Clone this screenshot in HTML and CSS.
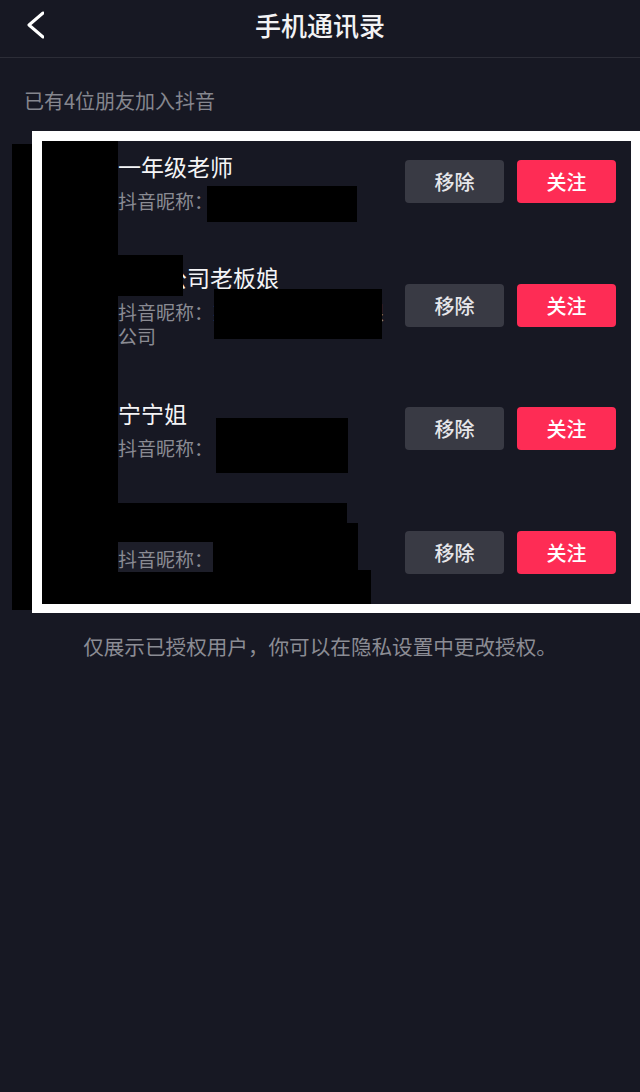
FILE: index.html
```html
<!DOCTYPE html>
<html lang="zh-CN">
<head>
<meta charset="utf-8">
<title>手机通讯录</title>
<link rel="stylesheet" href="styles.css">
</head>
<body>
<div class="page">
  <header class="topbar">
    <div class="back">
      <svg width="20" height="28" viewBox="0 0 20 28"><polyline points="19,2 5,14 19,26" fill="none" stroke="#ffffff" stroke-width="3" stroke-linecap="round" stroke-linejoin="round"/></svg>
    </div>
    <h1 class="title">手机通讯录</h1>
    <div></div>
  </header>

  <p class="subtitle">已有4位朋友加入抖音</p>

  <ul class="list">
    <li class="row">
      <div class="avatar"></div>
      <div class="info">
        <div class="name">一年级老师</div>
        <div class="nick">抖音昵称：某某某某某某</div>
      </div>
      <div class="actions">
        <button class="btn btn-remove">移除</button>
        <button class="btn btn-follow">关注</button>
      </div>
    </li>
    <li class="row">
      <div class="avatar"></div>
      <div class="info">
        <div class="name">某某公司老板娘</div>
        <div class="nick">抖音昵称：某某某某某某某有限公司</div>
      </div>
      <div class="actions">
        <button class="btn btn-remove">移除</button>
        <button class="btn btn-follow">关注</button>
      </div>
    </li>
    <li class="row">
      <div class="avatar"></div>
      <div class="info">
        <div class="name">宁宁姐</div>
        <div class="nick">抖音昵称：&nbsp;某某某某某</div>
      </div>
      <div class="actions">
        <button class="btn btn-remove">移除</button>
        <button class="btn btn-follow">关注</button>
      </div>
    </li>
    <li class="row">
      <div class="avatar"></div>
      <div class="info">
        <div class="name">某某某某</div>
        <div class="nick"><span class="unmasked">抖音昵称：</span>某某某某某某 dy2019abcdefghij</div>
      </div>
      <div class="actions">
        <button class="btn btn-remove">移除</button>
        <button class="btn btn-follow">关注</button>
      </div>
    </li>
  </ul>

  <p class="footnote">仅展示已授权用户，你可以在隐私设置中更改授权。</p>

  <div class="redactions">
    <div class="mask m-outer"></div>
    <div class="mask m-column"></div>
    <div class="mask m-nick1"></div>
    <div class="mask m-name2"></div>
    <div class="mask m-nick2"></div>
    <div class="mask m-nick3"></div>
    <div class="mask m-row4a"></div>
    <div class="mask m-row4b"></div>
    <div class="mask m-row4c"></div>
    <div class="frame"></div>
  </div>
</div>
</body>
</html>
```

FILE: styles.css
```css
* { box-sizing: border-box; }

html, body {
  margin: 0;
  padding: 0;
  background: #171823;
}

body {
  font-family: "Noto Sans CJK SC", "Noto Sans", "Liberation Sans", sans-serif;
  color: #ffffff;
}

.page {
  position: relative;
  width: 640px;
  min-height: 1092px;
  background: #171823;
}

.topbar {
  display: grid;
  grid-template-columns: 1fr auto 1fr;
  align-items: start;
  height: 58px;
  border-bottom: 1px solid #2c2d37;
}

.back {
  padding: 11px 0 0 24px;
}

.back svg { display: block; }

.title {
  margin: 9px 0 0;
  font-size: 26px;
  line-height: 32px;
  font-weight: 500;
  color: #f2f2f4;
}

.subtitle {
  margin: 0;
  padding: 29px 24px 0;
  font-size: 20px;
  line-height: 28px;
  color: #85868e;
}

.list {
  list-style: none;
  margin: 5px 0 0;
  padding: 0;
}

.row {
  display: flex;
  align-items: center;
  gap: 14px;
  height: 123.5px;
  padding: 0 24px;
}

.avatar {
  flex: none;
  width: 80px;
  height: 80px;
  border-radius: 50%;
  background: #2a2b35;
}

.info {
  flex: 1;
  min-width: 0;
}

.name {
  font-size: 23px;
  line-height: 30px;
  margin-bottom: 8px;
  color: #f4f4f6;
}

.nick {
  font-size: 19px;
  line-height: 24px;
  color: #8a8b93;
}

.unmasked {
  position: relative;
  z-index: 3;
  padding-top: 3px;
  background: #1d1e29;
}

.actions {
  flex: none;
  display: flex;
  gap: 13px;
}

.btn {
  width: 99px;
  height: 43px;
  border: 0;
  border-radius: 4px;
  font-family: "Noto Sans CJK SC", "Noto Sans", sans-serif;
  font-size: 20px;
  line-height: 43px;
  padding: 0;
  font-weight: 500;
}

.btn-remove {
  background: #393a44;
  color: #e6e6ea;
}

.btn-follow {
  background: #fe2c55;
  color: #ffffff;
}

.footnote {
  margin: 0;
  padding-top: 17px;
  font-size: 20.6px;
  line-height: 30px;
  text-align: center;
  color: #8b8c94;
}

/* redaction overlay (drawn over the screenshot content) */
.redactions {
  position: absolute;
  left: 0;
  top: 0;
  width: 640px;
  height: 0;
  z-index: 2;
  pointer-events: none;
}

.mask {
  position: absolute;
  background: #000000;
}

.m-outer  { left: 12px;  top: 144px; width: 20px;  height: 466px; }
.m-column { left: 42px;  top: 141px; width: 76px;  height: 463px; }
.m-nick1  { left: 207px; top: 186px; width: 150px; height: 36px; }
.m-name2  { left: 118px; top: 255px; width: 65px;  height: 41px; }
.m-nick2  { left: 214px; top: 289px; width: 168px; height: 50px; }
.m-nick3  { left: 216px; top: 418px; width: 132px; height: 55px; }
.m-row4a  { left: 118px; top: 503px; width: 229px; height: 20px; }
.m-row4b  { left: 118px; top: 523px; width: 240px; height: 47px; }
.m-row4c  { left: 118px; top: 570px; width: 253px; height: 34px; }

.frame {
  position: absolute;
  left: 32px;
  top: 131px;
  width: 608px;
  height: 482px;
  border: 10px solid #ffffff;
  border-right-width: 9px;
  border-bottom-width: 9px;
}
```
